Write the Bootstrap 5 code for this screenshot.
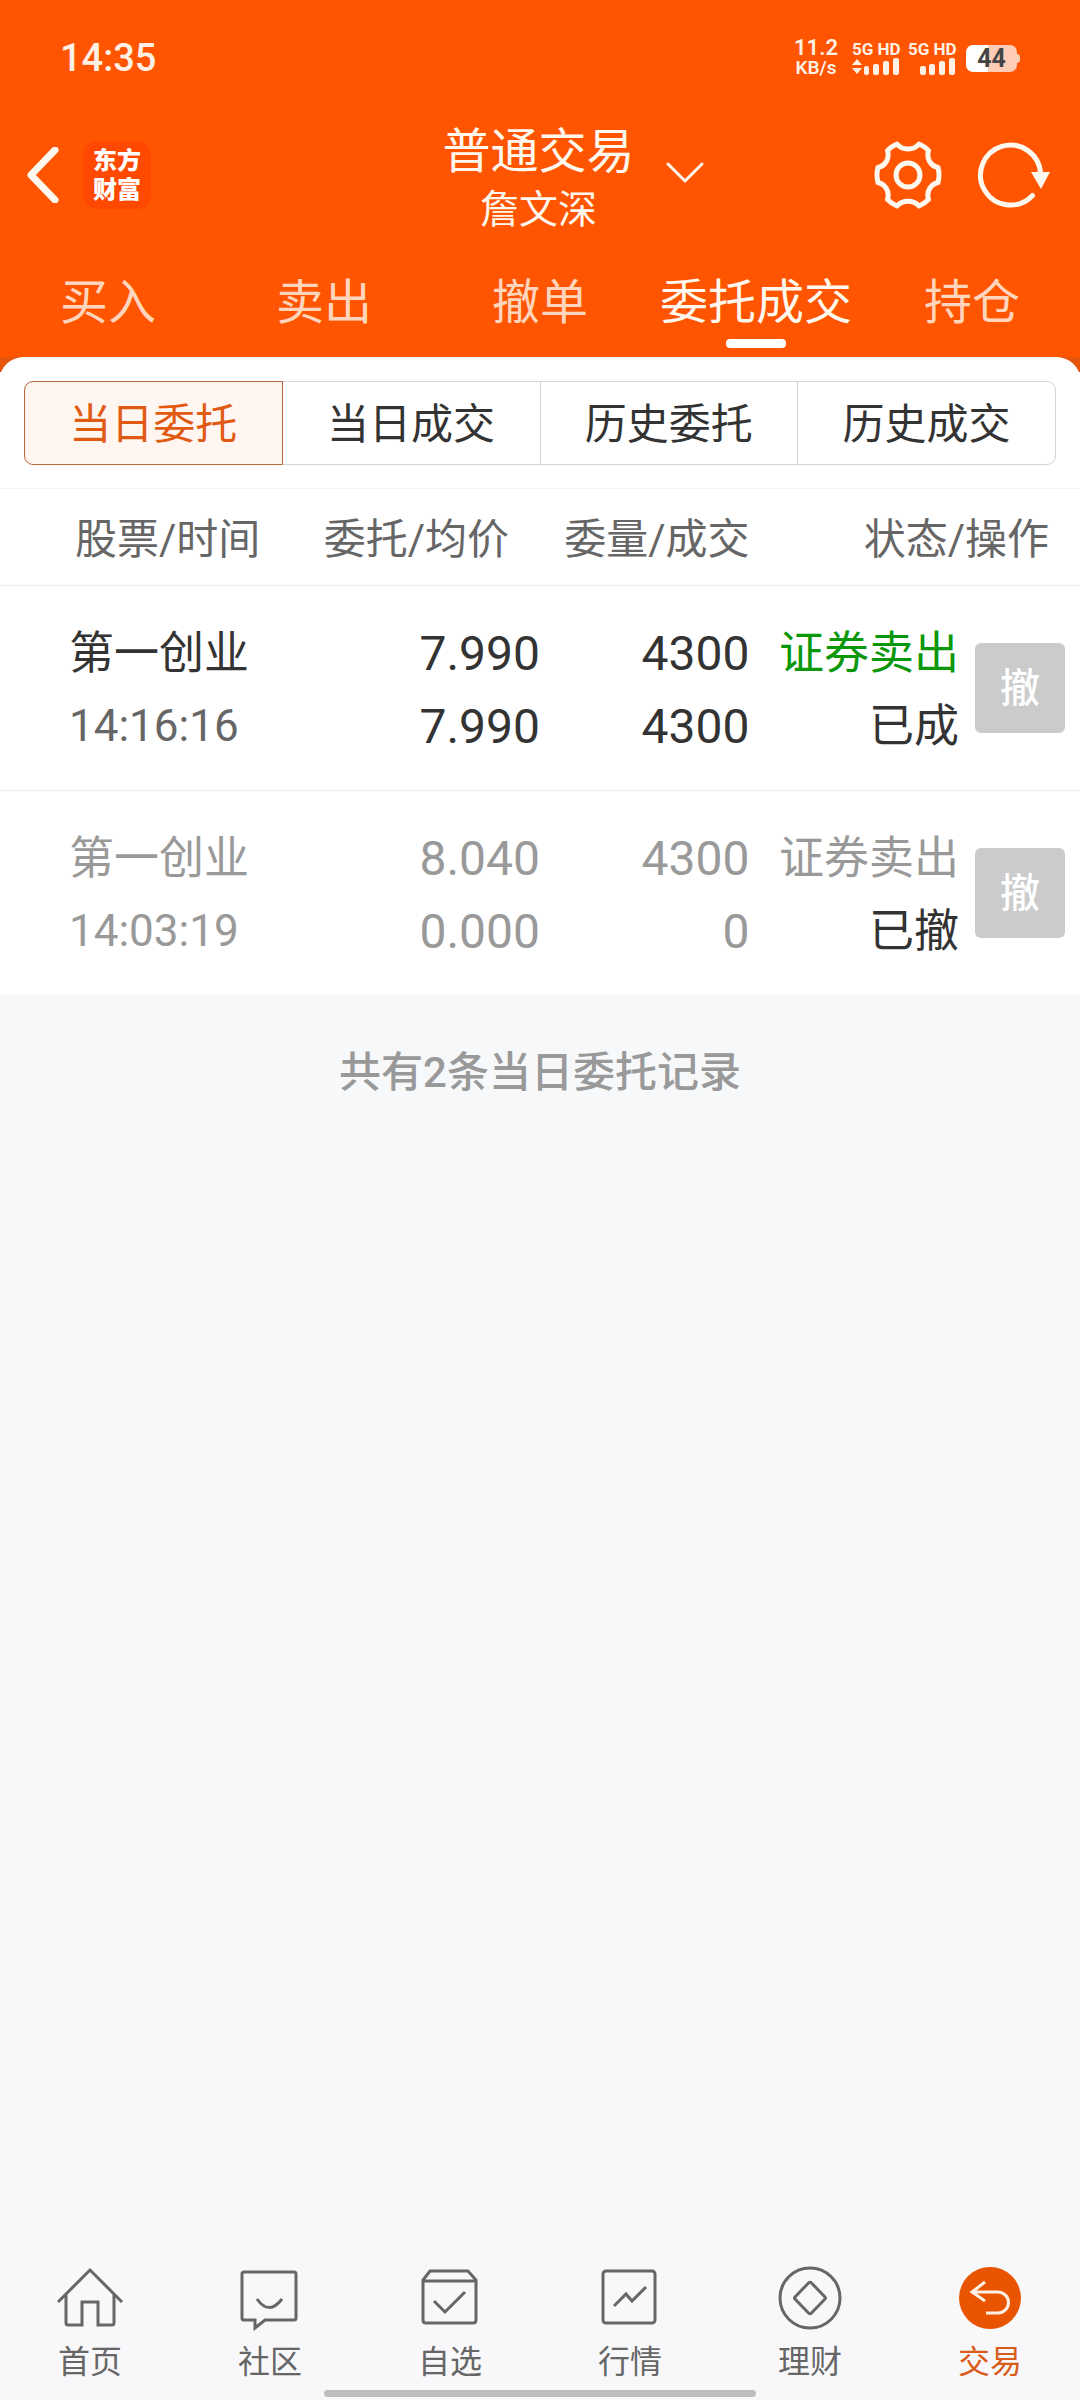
<!DOCTYPE html>
<html lang="zh-CN">
<head>
<meta charset="utf-8">
<meta name="viewport" content="width=device-width, initial-scale=1">
<title>普通交易</title>
<link href="https://cdn.jsdelivr.net/npm/bootstrap@5.3.0/dist/css/bootstrap.min.css" rel="stylesheet">
<style>
  body { font-family: Roboto, "Noto Sans CJK SC", sans-serif; background: #f7f8fa; color: #333; }
  a { text-decoration: none; }
  svg { display: block; }
  .topbar { background: #ff5500; color: #fff8ee; }

  .statusbar { height: 116px; padding: 0 60px; color: #fff0e5; }
  .clock { font-size: 38px; font-weight: 500; }
  .speed { font-size: 22px; line-height: 20px; font-weight: 600; text-align: center; margin-right: 14px; }
  .speed div + div { font-size: 19px; }
  .sim { width: 48px; font-size: 17px; line-height: 15px; font-weight: 700; white-space: nowrap; }
  .battery { width: 51px; height: 27px; border-radius: 7px; color: #444; font-size: 25px; line-height: 27px; font-weight: 700; background: linear-gradient(90deg, #fff 44%, #ffcdb5 44%); margin-left: 10px; }
  .battery-tip { width: 3px; height: 9px; background: #ffcdb5; border-radius: 0 3px 3px 0; }

  .titlebar { height: 118px; padding: 0 30px 0 27px; }
  .side { flex: 1 1 0; }
  .plain-btn { border: 0; background: none; padding: 0; color: inherit; }
  .brand-tile { width: 68px; height: 68px; border-radius: 14px; background: #ff4800; color: #fff; font-family: "Noto Sans CJK SC", sans-serif; font-size: 24px; line-height: 29px; font-weight: 900; padding-top: 3px; }
  .title-block { padding: 12px 3px 0 0; margin-left: 3px; }
  .title-main { font-size: 48px; line-height: 58px; margin: 0; font-weight: 400; }
  .title-sub { font-size: 39px; line-height: 58px; }
  .title-arrow { position: absolute; left: 100%; top: 50px; margin-left: 28px; }
  .refresh { margin-left: 34px; }

  .trade-tabs { height: 123px; }
  .trade-tabs a { flex: 1 1 0; font-size: 48px; line-height: 60px; padding-top: 39px; color: #ffd5bd; white-space: nowrap; display: flex; flex-direction: column; align-items: center; }
  .trade-tabs a.active { color: #fff8ee; }
  .trade-tabs a.active::after { content: ""; width: 60px; height: 9px; border-radius: 4px; background: #fff; margin-top: 6px; }

  .sheet-wrap { background: linear-gradient(#e5560c 15px, #fff 15px); }
  .sheet { background: #fff; border-radius: 24px 24px 0 0 / 22px 22px 0 0; padding-top: 24px; }
  .seg { margin: 0 24px 23px; }
  .seg .btn { height: 84px; padding: 4px 0 0; font-size: 42px; line-height: 78px; color: #333; background: #fff; border: 1px solid #d4d4d4; border-radius: 9px; flex: 1 1 0; }
  .seg .btn.active { color: #e05a12; background: #fff6f2; border-color: #b8683c; }

  .orders { table-layout: fixed; width: 100%; margin: 0; }
  .orders th { height: 97px; padding: 4px 0 0; font-size: 42px; font-weight: 400; color: #666; text-align: right; border-top: 1px solid #f5f5f5; border-bottom: 1px solid #ececec; }
  .orders th:first-child { padding-left: 75px; text-align: left; }
  .orders .pad-end { padding-right: 31px; }
  .orders td { padding: 31px 0 27px; font-size: 48px; line-height: 73px; text-align: right; white-space: nowrap; vertical-align: middle; }
  .orders td.act { padding: 29px 15px 29px 0; }
  .orders tbody tr + tr td { border-top: 1px solid #ececec; }
  .orders td:first-child { padding-left: 69px; text-align: left; }
  .orders .zh { font-size: 45px; }
  .orders .time { font-size: 44px; color: #666; }
  .orders .muted, .orders .muted .time { color: #999; }
  .sell { color: #0a980a; }
  .ink { color: #333; }
  .cancel { width: 90px; height: 90px; border: 0; border-radius: 6px; background: #cbcbcb; color: #fff; font-size: 40px; line-height: 88px; font-weight: 500; padding: 2px 0 0; display: block; margin-left: auto; }
  .summary { font-size: 42px; line-height: 60px; font-weight: 500; color: #999; padding-top: 48px; }

  .dock { background: #f8f8fa; padding-bottom: 8px; }
  .dock a { flex: 1 1 0; color: #666; font-size: 32px; line-height: 40px; }
  .dock a.active { color: #d95c1a; }
  .dock svg { margin: 0 auto 10px; fill: none; stroke: currentColor; stroke-width: 3; }
  .gesture { width: 40%; height: 7px; border-radius: 4px; background: #bdbdbd; margin: 0 auto 3px; }
</style>
</head>
<body>
<div class="d-flex flex-column min-vh-100">
  <header class="topbar">
    <div class="statusbar d-flex align-items-center">
      <div class="clock me-auto">14:35</div>
      <div class="d-flex align-items-center">
        <div class="speed"><div>11.2</div><div>KB/s</div></div>
        <div class="sim">5G HD
          <svg width="48" height="18" viewBox="0 0 48 18" fill="#fff0e5"><path d="M5 2l5 6H0zM5 17l5-6H0z"/><rect x="12" y="9" width="5" height="9" rx="2"/><rect x="21" y="7" width="6" height="11" rx="2"/><rect x="31" y="4" width="6" height="14" rx="2"/><rect x="41" y="1" width="6" height="17" rx="2"/></svg>
        </div>
        <div class="sim ms-2">5G HD
          <svg width="48" height="18" viewBox="0 0 48 18" fill="#fff0e5"><rect x="12" y="9" width="6" height="9" rx="2"/><rect x="21" y="7" width="6" height="11" rx="2"/><rect x="31" y="4" width="6" height="14" rx="2"/><rect x="41" y="1" width="6" height="17" rx="2"/></svg>
        </div>
        <div class="battery text-center">44</div>
        <div class="battery-tip"></div>
      </div>
    </div>

    <div class="titlebar d-flex align-items-center">
      <div class="side d-flex align-items-center">
        <button class="plain-btn" type="button" aria-label="返回">
          <svg width="56" height="56" viewBox="0 0 56 56" fill="none" stroke="#fff8ee" stroke-width="7" stroke-linecap="round" stroke-linejoin="round"><path d="M28 3L4 28l24 25"/></svg>
        </button>
        <div class="brand-tile text-center"><div>东方</div><div>财富</div></div>
      </div>
      <div class="title-block position-relative text-center">
        <h1 class="title-main">普通交易</h1>
        <div class="title-sub">詹文深</div>
        <button class="plain-btn title-arrow" type="button" aria-label="切换账户">
          <svg width="38" height="24" viewBox="0 0 38 24" fill="none" stroke="#fff8ee" stroke-width="3" stroke-linecap="round" stroke-linejoin="round"><path d="M2 3l17 17L36 3"/></svg>
        </button>
      </div>
      <div class="side d-flex justify-content-end align-items-center">
        <button class="plain-btn" type="button" aria-label="设置">
          <svg width="68" height="68" viewBox="0 0 68 68" fill="none" stroke="#fff8ee" stroke-width="5" stroke-linejoin="round"><circle cx="34" cy="34" r="12"/><path d="M23 3C28 9.500 40 9.500 45 3Q50 5 54.500 9.500C52 18 57 25 64 26.500Q66 34 64 41.500C57 43 52 50 54.500 58.500Q50 63 45 65C40 58.500 28 58.500 23 65Q18 63 13.500 58.500C16 50 11 43 4 41.500Q2 34 4 26.500C11 25 16 18 13.500 9.500Q18 5 23 3Z"/></svg>
        </button>
        <button class="plain-btn refresh" type="button" aria-label="刷新">
          <svg width="74" height="68" viewBox="0 0 74 68" fill="none" stroke="#fff8ee" stroke-width="5" stroke-linecap="round"><path d="M56.500 54.500A30 30 0 1 1 64.500 33"/><path d="M55 31h19l-9 17z" fill="#fff8ee" stroke="none"/></svg>
        </button>
      </div>
    </div>

    <nav class="trade-tabs d-flex">
      <a href="#">买入</a>
      <a href="#">卖出</a>
      <a href="#">撤单</a>
      <a href="#" class="active" aria-current="page">委托成交</a>
      <a href="#">持仓</a>
    </nav>
  </header>

  <main class="flex-grow-1">
    <div class="sheet-wrap">
      <div class="sheet">
        <div class="seg btn-group d-flex">
          <button type="button" class="btn active">当日委托</button>
          <button type="button" class="btn">当日成交</button>
          <button type="button" class="btn">历史委托</button>
          <button type="button" class="btn">历史成交</button>
        </div>
        <table class="orders">
          <colgroup>
            <col style="width:28%"><col style="width:22%"><col style="width:19.400%"><col style="width:19.400%"><col>
          </colgroup>
          <thead>
            <tr><th scope="col">股票/时间</th><th scope="col" class="pad-end">委托/均价</th><th scope="col">委量/成交</th><th scope="col" colspan="2" class="pad-end">状态/操作</th></tr>
          </thead>
          <tbody>
            <tr>
              <td><div class="zh">第一创业</div><div class="time">14:16:16</div></td>
              <td><div>7.990</div><div>7.990</div></td>
              <td><div>4300</div><div>4300</div></td>
              <td class="zh"><div class="sell">证券卖出</div><div>已成</div></td>
              <td class="act"><button type="button" class="cancel">撤</button></td>
            </tr>
            <tr class="muted">
              <td><div class="zh">第一创业</div><div class="time">14:03:19</div></td>
              <td><div>8.040</div><div>0.000</div></td>
              <td><div>4300</div><div>0</div></td>
              <td class="zh"><div>证券卖出</div><div class="ink">已撤</div></td>
              <td class="act"><button type="button" class="cancel">撤</button></td>
            </tr>
          </tbody>
        </table>
      </div>
    </div>
    <div class="summary text-center">共有2条当日委托记录</div>
  </main>

  <footer class="dock">
    <nav class="d-flex text-center">
      <a href="#"><svg width="66" height="66" viewBox="0 0 66 66"><path d="M1 36L33 4l32 32M9 29v28q0 2 2 2h14V36h16v23h14q2 0 2-2V29"/></svg>首页</a>
      <a href="#"><svg width="66" height="66" viewBox="0 0 66 66"><path d="M7 6h50q2 0 2 2v44q0 2-2 2H28l-10 8v-8H7q-2 0-2-2V8q0-2 2-2zM20 33q12 17 25 0"/></svg>社区</a>
      <a href="#"><svg width="66" height="66" viewBox="0 0 66 66"><path d="M13 5h38l8 9v40q0 3-3 3H9q-3 0-3-3V14zM6 15h53M17 35l11 11 20-20"/></svg>自选</a>
      <a href="#"><svg width="66" height="66" viewBox="0 0 66 66"><rect x="6" y="5" width="52" height="52" rx="3"/><path d="M17 40l12-12 6 7 14-14"/></svg>行情</a>
      <a href="#"><svg width="66" height="66" viewBox="0 0 66 66"><circle cx="33" cy="32" r="30"/><path d="M31.500 17q1.500-1.500 3 0l13.500 14q1 1 0 2L34.500 47q-1.500 1.500-3 0L18 33q-1-1 0-2z"/></svg>理财</a>
      <a href="#" class="active" aria-current="page"><svg width="66" height="66" viewBox="0 0 66 66"><circle cx="33" cy="32" r="31" fill="#e85400" stroke="none"/><path d="M28 16L15 26l13 9M16 26h25a10 10 0 0 1 0 21H29" stroke="#fff0e5"/></svg>交易</a>
    </nav>
  </footer>
  <div class="dock pb-0"><div class="gesture"></div></div>
</div>
<script src="https://cdn.jsdelivr.net/npm/bootstrap@5.3.0/dist/js/bootstrap.bundle.min.js"></script>
</body>
</html>
